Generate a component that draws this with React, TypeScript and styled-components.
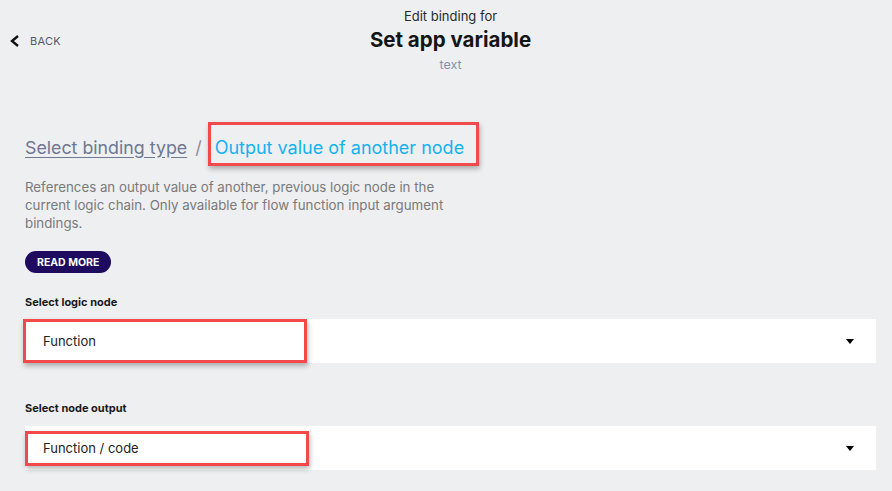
import React from "react";
import styled, { createGlobalStyle } from "styled-components";

const GlobalStyle = createGlobalStyle`
  html, body {
    margin: 0;
    padding: 0;
    background: #eeeff1;
    font-family: Inter, "Liberation Sans", sans-serif;
  }
`;

const Page = styled.div`
  width: 892px;
  height: 491px;
  overflow: hidden;
  background: #eeeff1;
  color: #1a1a1a;
`;

const Header = styled.header`
  display: grid;
  grid-template-columns: 1fr auto 1fr;
  align-items: center;
  padding: 7px 0 0 9px;
`;

const BackButton = styled.button`
  justify-self: start;
  display: flex;
  align-items: center;
  gap: 10px;
  margin-left: 1px;
  padding: 0;
  border: none;
  background: none;
  font-family: inherit;
  font-size: 11px;
  letter-spacing: 0.3px;
  color: #555a66;
  cursor: pointer;
`;

const TitleBlock = styled.div`
  display: flex;
  flex-direction: column;
  align-items: center;
`;

const Overline = styled.div`
  font-size: 13px;
  line-height: 18px;
  color: #2a2a2a;
`;

const Title = styled.h1`
  margin: 2px 0 0;
  font-size: 20.5px;
  line-height: 26px;
  font-weight: 700;
  color: #151515;
`;

const Subtitle = styled.div`
  margin-top: 3px;
  font-size: 12.5px;
  line-height: 18px;
  color: #8592aa;
`;

const Content = styled.main`
  padding: 48px 16px 0 25px;
`;

const Breadcrumb = styled.div`
  display: flex;
  align-items: center;
  height: 44px;
  font-size: 18px;
`;

const CrumbLink = styled.a`
  margin-top: 6px;
  font-size: 17.8px;
  color: #6f7890;
  text-decoration: underline;
  text-underline-offset: 3px;
`;

const Slash = styled.span`
  margin: 6px 6px 0 8px;
  color: #8a8f9a;
`;

const Highlight = styled.div<{ $height?: number; $shift?: number }>`
  box-sizing: border-box;
  display: flex;
  align-items: center;
  height: ${(p) => (p.$height ? `${p.$height}px` : "100%")};
  margin-left: ${(p) => p.$shift ?? 0}px;
  border: 3px solid #f24a4a;
  box-shadow: 1px 3px 5px rgba(0, 0, 0, 0.28);
`;

const ActiveCrumb = styled(Highlight)`
  padding: 6px 12px 0 4px;
  color: #15b2ef;
`;

const Description = styled.p`
  margin: 12px 0 0;
  width: 425px;
  font-size: 13.3px;
  line-height: 18px;
  color: #7a7a7a;
`;

const ReadMore = styled.button`
  display: block;
  margin-top: 19px;
  height: 22px;
  padding: 0 12px;
  border: none;
  border-radius: 11px;
  background: #1e0a5e;
  color: #fff;
  font-family: inherit;
  font-size: 10.5px;
  font-weight: 700;
`;

const Label = styled.div<{ $gap: number }>`
  margin-top: ${(p) => p.$gap}px;
  font-size: 11px;
  line-height: 16px;
  font-weight: 700;
  color: #1a1a1a;
`;

const Select = styled.div<{ $gap: number }>`
  display: flex;
  align-items: center;
  justify-content: space-between;
  height: 44px;
  margin-top: ${(p) => p.$gap}px;
  padding-right: 22px;
  background: #fff;
`;

const Value = styled(Highlight)`
  width: 284px;
  padding-left: ${(p) => 15 - (p.$shift ?? 0)}px;
  font-size: 13px;
  color: #222;
  background: #fff;
`;

const Caret = styled.span`
  width: 0;
  height: 0;
  border-left: 4.5px solid transparent;
  border-right: 4.5px solid transparent;
  border-top: 5px solid #000;
`;

function ChevronLeft() {
  return (
    <svg width="10" height="12" viewBox="0 0 10 12">
      <polyline points="8,1 2,6 8,11" fill="none" stroke="#111" strokeWidth="2.4" />
    </svg>
  );
}

export default function App() {
  return (
    <Page>
      <GlobalStyle />
      <Header>
        <BackButton>
          <ChevronLeft />
          BACK
        </BackButton>
        <TitleBlock>
          <Overline>Edit binding for</Overline>
          <Title>Set app variable</Title>
          <Subtitle>text</Subtitle>
        </TitleBlock>
        <div />
      </Header>
      <Content>
        <Breadcrumb>
          <CrumbLink>Select binding type</CrumbLink>
          <Slash>/</Slash>
          <ActiveCrumb>Output value of another node</ActiveCrumb>
        </Breadcrumb>
        <Description>
          References an output value of another, previous logic node in the
          current logic chain. Only available for flow function input argument
          bindings.
        </Description>
        <ReadMore>READ MORE</ReadMore>
        <Label $gap={21}>Select logic node</Label>
        <Select $gap={9}>
          <Value $shift={-2}>Function</Value>
          <Caret />
        </Select>
        <Label $gap={37}>Select node output</Label>
        <Select $gap={10}>
          <Value $height={35}>Function / code</Value>
          <Caret />
        </Select>
      </Content>
    </Page>
  );
}
